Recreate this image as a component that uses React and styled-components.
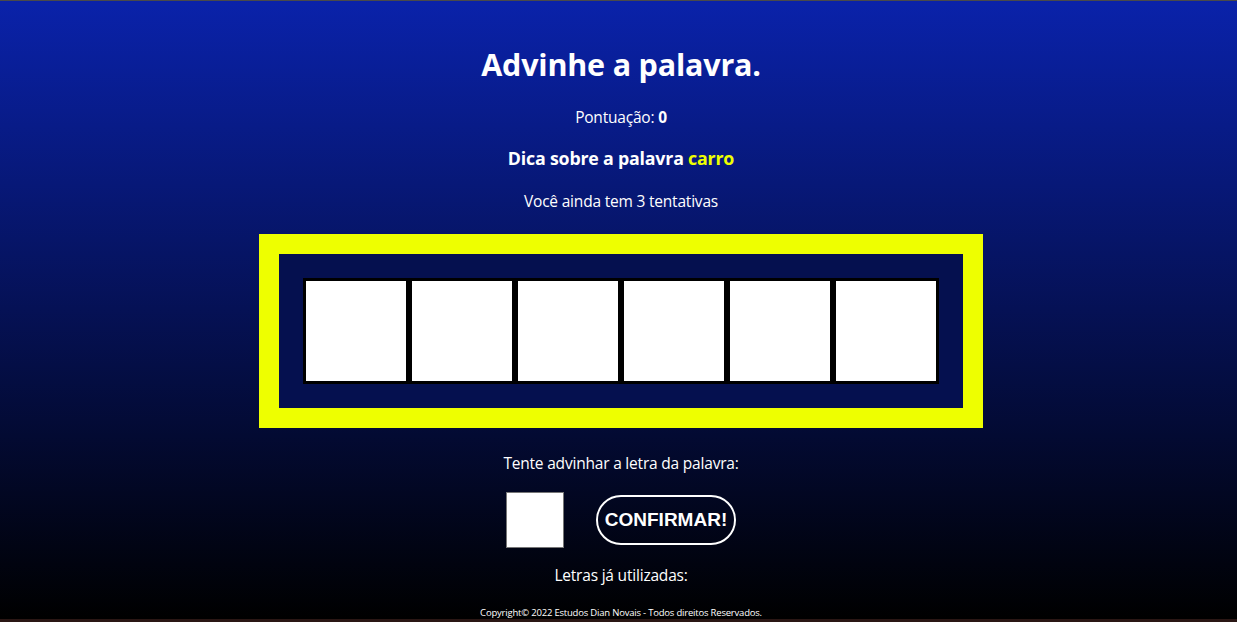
import React, { useState } from "react";
import styled, { createGlobalStyle } from "styled-components";

const GlobalStyle = createGlobalStyle`
  html, body {
    margin: 0;
    padding: 0;
    height: 100%;
  }
  body {
    font-family: "Open Sans", "Noto Sans", sans-serif;
    color: white;
    background: #000;
  }
`;

const Page = styled.main`
  box-sizing: border-box;
  height: 622px;
  padding-left: 5px;
  border-top: 1px solid #4a4a4a;
  border-bottom: 3px solid #2a1614;
  background: linear-gradient(to bottom, #0a22aa 0%, #000 100%);
  display: flex;
  flex-direction: column;
  align-items: center;
  text-align: center;
  overflow: hidden;
`;

const Title = styled.h1`
  margin: 42px 0 0;
  font-size: 30.5px;
  line-height: 42px;
  font-weight: 700;
  letter-spacing: -0.2px;
`;

const Line = styled.p`
  margin: ${(p) => p.$top || 0}px 0 0;
  font-size: ${(p) => p.$size || 15.5}px;
  line-height: 20px;
  font-weight: ${(p) => (p.$bold ? 700 : 400)};
  letter-spacing: -0.2px;
`;

const Highlight = styled.span`
  color: #eeff00;
`;

const Frame = styled.section`
  margin-top: 23px;
  border: 20px solid #eeff00;
  background: #05104f;
  padding: 24px;
  display: flex;
`;

const Cell = styled.div`
  width: 100px;
  height: 100px;
  border: 3px solid #000;
  background: #fff;
`;

const Row = styled.div`
  margin-top: 19px;
  display: flex;
  align-items: center;
  gap: 32px;
`;

const LetterInput = styled.input`
  box-sizing: border-box;
  width: 58px;
  height: 56px;
  border: 1px solid #767676;
  background: #fff;
  font-size: 28px;
  text-align: center;
  outline: none;
`;

const Confirm = styled.button`
  box-sizing: border-box;
  width: 140px;
  height: 50px;
  border: 2px solid #fff;
  border-radius: 25px;
  background: transparent;
  color: #fff;
  font-family: "Liberation Sans", Arial, sans-serif;
  font-weight: 700;
  font-size: 19px;
  padding: 0;
  cursor: pointer;
`;

const Footer = styled.footer`
  margin-top: 21px;
  font-size: 9.5px;
  line-height: 14px;
  letter-spacing: -0.2px;
`;

export default function App() {
  const [letter, setLetter] = useState("");
  const word = "carro";
  const cells = Array.from({ length: 6 });

  return (
    <Page>
      <GlobalStyle />
      <Title>Advinhe a palavra.</Title>
      <Line $top={22}>
        Pontuação: <b>0</b>
      </Line>
      <Line $top={21} $size={17.8} $bold>
        Dica sobre a palavra <Highlight>{word}</Highlight>
      </Line>
      <Line $top={23}>Você ainda tem 3 tentativas</Line>
      <Frame>
        {cells.map((_, i) => (
          <Cell key={i} />
        ))}
      </Frame>
      <Line $top={25}>Tente advinhar a letra da palavra:</Line>
      <Row>
        <LetterInput
          maxLength={1}
          value={letter}
          onChange={(e) => setLetter(e.target.value)}
        />
        <Confirm>CONFIRMAR!</Confirm>
      </Row>
      <Line $top={17}>Letras já utilizadas:</Line>
      <Footer>Copyright© 2022 Estudos Dian Novais - Todos direitos Reservados.</Footer>
    </Page>
  );
}
